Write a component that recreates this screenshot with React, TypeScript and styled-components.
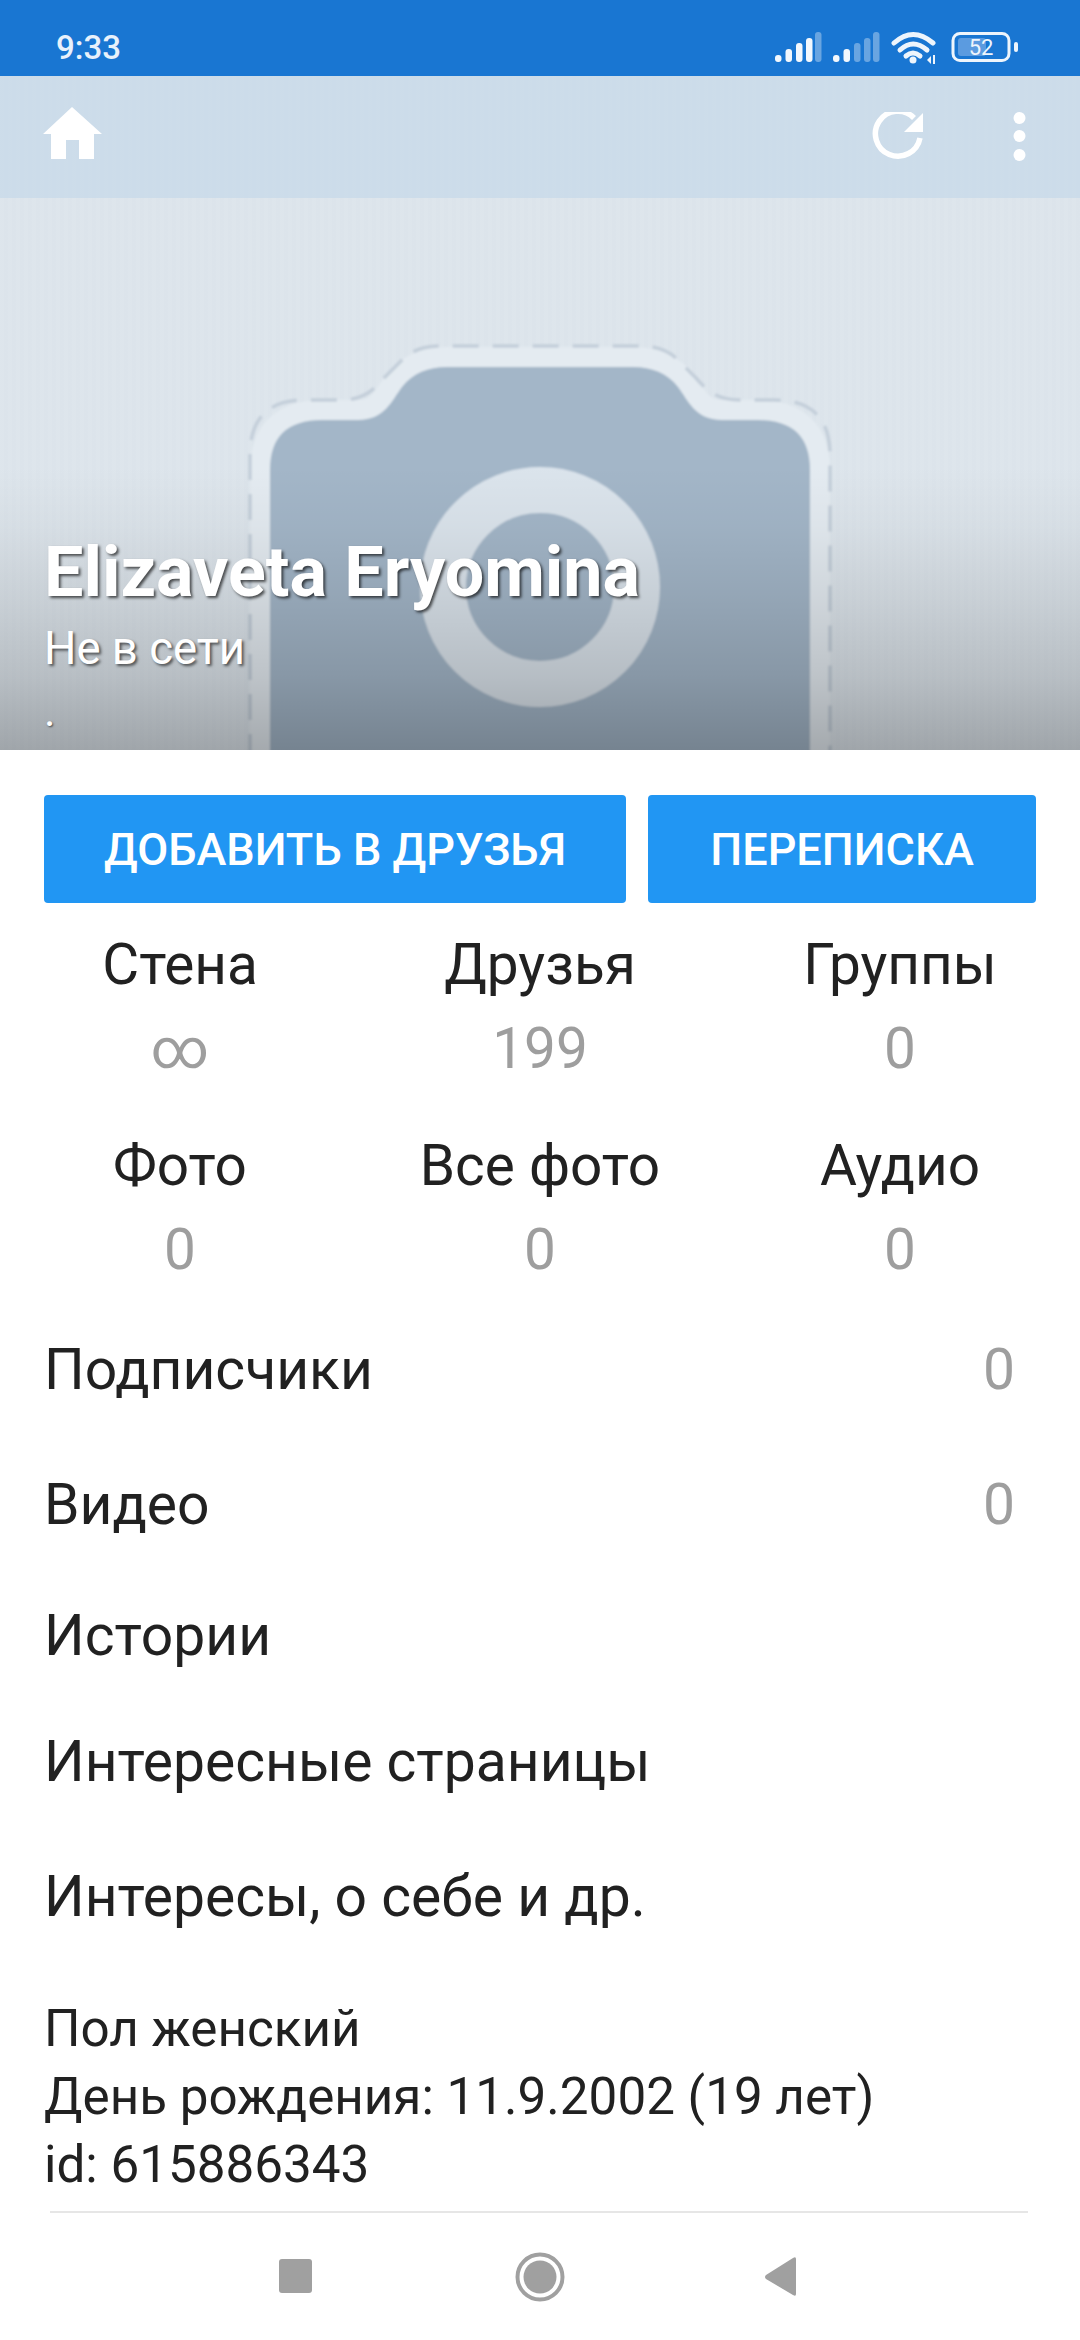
import React from "react";
import styled, { createGlobalStyle } from "styled-components";

const Global = createGlobalStyle`
  html, body { margin: 0; padding: 0; background: #fff; }
  * { box-sizing: border-box; }
`;

const Page = styled.div`
  width: 1080px;
  height: 2340px;
  overflow: hidden;
  display: flex;
  flex-direction: column;
  background: #fff;
  font-family: Roboto, "Noto Sans", sans-serif;
  color: #212121;
`;

const StatusBar = styled.div`
  height: 76px;
  flex: none;
  background: #1976d2;
  display: flex;
  align-items: flex-start;
  justify-content: space-between;
  padding: 0 59px 0 56px;
`;

const Clock = styled.span`
  font-size: 33px;
  font-weight: 500;
  line-height: 36px;
  color: #e8f1fb;
  margin-top: 30px;
`;

const StatusIcons = styled.svg`
  width: 250px;
  height: 38px;
  margin-top: 28px;
`;

const Hero = styled.div`
  position: relative;
  height: 674px;
  flex: none;
  overflow: hidden;
  display: flex;
  flex-direction: column;
  justify-content: space-between;
  background: repeating-linear-gradient(90deg, rgba(255, 255, 255, 0.02) 0 4px, rgba(0, 0, 0, 0.003) 4px 8px), #dde5ec;
`;

const HeroArt = styled.svg`
  position: absolute;
  inset: 0;
  width: 1080px;
  height: 674px;
`;

const HeroShade = styled.div`
  position: absolute;
  inset: 0;
  background: linear-gradient(
    to bottom,
    rgba(0, 0, 0, 0) 0,
    rgba(0, 0, 0, 0) 390px,
    rgba(0, 0, 0, 0.03) 450px,
    rgba(0, 0, 0, 0.09) 520px,
    rgba(0, 0, 0, 0.17) 600px,
    rgba(0, 0, 0, 0.28) 674px
  );
`;

const Toolbar = styled.div`
  position: relative;
  height: 122px;
  display: flex;
  align-items: center;
  justify-content: space-between;
  background: rgba(180, 208, 232, 0.4);
  padding: 0 0 0 42px;
`;

const ToolbarActions = styled.div`
  display: flex;
  align-items: center;
  gap: 89px;
  padding-right: 54px;
`;

const IconSvg = styled.svg<{ $lift?: number }>`
  display: block;
  flex: none;
  margin-top: ${(p) => p.$lift ?? 0}px;
`;

const HeroText = styled.div`
  position: relative;
  padding: 0 0 0 44px;
  color: #fff;
`;

const Name = styled.div`
  font-size: 70px;
  font-weight: 700;
  line-height: 76px;
  text-shadow: 2px 2px 3px rgba(0, 0, 0, 0.65);
`;

const Presence = styled.div`
  font-size: 45.5px;
  line-height: 56px;
  margin-top: 11px;
  text-shadow: 2px 2px 3px rgba(0, 0, 0, 0.6);
`;

const Dot = styled.div`
  font-size: 44px;
  line-height: 56px;
  margin-top: 6px;
  margin-bottom: 11px;
  text-shadow: 1px 1px 2px rgba(0, 0, 0, 0.6);
`;

const Actions = styled.div`
  display: flex;
  gap: 22px;
  padding: 45px 44px 0;
`;

const ActionButton = styled.div<{ $width: number }>`
  width: ${(p) => p.$width}px;
  height: 108px;
  flex: none;
  display: flex;
  align-items: center;
  justify-content: center;
  background: #2196f3;
  border-radius: 4px;
  color: #fff;
  font-size: 45px;
  font-weight: 500;
`;

const StatsGrid = styled.div`
  display: grid;
  grid-template-columns: repeat(3, 360px);
  row-gap: 49px;
  margin-top: 28px;
`;

const Stat = styled.div`
  display: flex;
  flex-direction: column;
  align-items: center;
`;

const StatLabel = styled.div`
  font-size: 56.7px;
  line-height: 68px;
`;

const StatValue = styled.div`
  font-size: 56.7px;
  line-height: 68px;
  margin-top: 16px;
  color: #9e9e9e;
`;

const RowList = styled.div`
  margin-top: 17px;
  display: flex;
  flex-direction: column;
`;

const Row = styled.div<{ $height: number }>`
  height: ${(p) => p.$height}px;
  display: flex;
  align-items: center;
  justify-content: space-between;
  padding: 0 65px 0 44px;
  font-size: 57px;
`;

const RowCount = styled.span`
  color: #9e9e9e;
  font-size: 57px;
`;

const Info = styled.div`
  padding: 26px 44px 0 44px;
  font-size: 51.2px;
  line-height: 68px;
`;

const Divider = styled.div`
  height: 2px;
  margin: 12px 52px 0 50px;
  background: #e6e6e6;
  flex: none;
`;

const NavBar = styled.div`
  flex: 1;
  display: flex;
  align-items: flex-start;
  justify-content: center;
`;

const NavIcons = styled.svg`
  width: 560px;
  height: 60px;
  margin-top: 35px;
`;

const bars = [
  { x: 774, top: 55 },
  { x: 784.5, top: 49 },
  { x: 795, top: 43 },
  { x: 805, top: 38 },
  { x: 814, top: 32 },
];

function Signal({ dx, dim }: { dx: number; dim: number }) {
  return (
    <g>
      {bars.map((b, i) => (
        <rect
          key={b.x}
          x={b.x + dx}
          y={b.top}
          width={6.5}
          height={62 - b.top}
          rx={3}
          fill="#ffffff"
          fillOpacity={i >= dim ? 0.35 : 0.95}
        />
      ))}
    </g>
  );
}

const stats = [
  ["Стена", "∞"],
  ["Друзья", "199"],
  ["Группы", "0"],
  ["Фото", "0"],
  ["Все фото", "0"],
  ["Аудио", "0"],
];

const rows: { label: string; count?: string; height: number }[] = [
  { label: "Подписчики", count: "0", height: 136 },
  { label: "Видео", count: "0", height: 135 },
  { label: "Истории", height: 126 },
  { label: "Интересные страницы", height: 126 },
  { label: "Интересы, о себе и др.", height: 145 },
];

const bodyPath =
  "M270 760 V470 Q270 420 322 420 H358 C385 420 392 400 402 387 C413 373 428 367 447 367 H633 C652 367 667 373 678 387 C688 400 695 420 722 420 H758 Q810 420 810 470 V760 Z";
const dashedPath =
  "M250 760 V455 Q250 400 305 400 H340 C362 400 372 392 384 378 L402 360 C412 350 425 346 440 346 H640 C655 346 668 350 678 360 L696 378 C708 392 718 400 740 400 H775 Q830 400 830 455 V760";

export default function App() {
  return (
    <Page>
      <Global />
      <StatusBar>
        <Clock>9:33</Clock>
        <StatusIcons viewBox="770 28 250 38">
          <Signal dx={0} dim={4} />
          <Signal dx={58} dim={2} />
          <g fill="none" stroke="#eef5fc" strokeWidth={5} strokeLinecap="round">
            <path d="M893 43 Q912 26 932 43" />
            <path d="M899 50 Q912 38 926 50" />
            <path d="M905 56 Q912 50 919 56" />
          </g>
          <circle cx={912} cy={60} r={3.5} fill="#eef5fc" />
          <path d="M926 60 L930 56 V64 Z M932 55 H934 V64 H932 Z" fill="#eef5fc" />
          <rect x={952} y={33.5} width={56} height={27} rx={7} fill="none" stroke="#eef5fc" strokeWidth={3} />
          <rect x={957} y={38} width={28} height={18} rx={3} fill="#5b9be0" />
          <rect x={1013} y={42} width={4} height={10} rx={2} fill="#eef5fc" />
          <text x={980} y={55} textAnchor="middle" fontFamily="Roboto" fontSize={22} fill="#eef5fc">
            52
          </text>
        </StatusIcons>
      </StatusBar>

      <Hero>
        <HeroArt viewBox="0 76 1080 674">
          <defs>
            <filter id="soft" x="-5%" y="-5%" width="110%" height="110%">
              <feGaussianBlur stdDeviation="1.2" />
            </filter>
          </defs>
          <g filter="url(#soft)">
            <path d={bodyPath} fill="#a3b6c8" stroke="#e4ebf1" strokeWidth={40} strokeLinejoin="round" paintOrder="stroke" />
            <path d={dashedPath} fill="none" stroke="#c4cfda" strokeWidth={3.5} strokeDasharray="26 14" />
            <circle cx={540} cy={587} r={97} fill="none" stroke="#dbe4ec" strokeWidth={46} />
          </g>
        </HeroArt>
        <HeroShade />
        <Toolbar>
          <IconSvg $lift={-8} width={60} height={54} viewBox="41 105 60 54">
            <path d="M71 106 L101 133 H93 V158 H78 V139 H65 V158 H50 V133 H42 Z" fill="#fff" />
          </IconSvg>
          <ToolbarActions>
            <IconSvg width={52} height={50} viewBox="870 112 52 50">
              <path d="M912 118 A22.5 22.5 0 1 0 918 138" fill="none" stroke="#fff" strokeWidth={5.5} />
              <path d="M921 113 V132 H902 Z" fill="#fff" />
            </IconSvg>
            <IconSvg width={13} height={50} viewBox="1012.5 112 13 50">
              <circle cx={1019} cy={118} r={6} fill="#fff" />
              <circle cx={1019} cy={136} r={6} fill="#fff" />
              <circle cx={1019} cy={155} r={6} fill="#fff" />
            </IconSvg>
          </ToolbarActions>
        </Toolbar>
        <HeroText>
          <Name>Elizaveta Eryomina</Name>
          <Presence>Не в сети</Presence>
          <Dot>.</Dot>
        </HeroText>
      </Hero>

      <Actions>
        <ActionButton $width={582}>ДОБАВИТЬ В ДРУЗЬЯ</ActionButton>
        <ActionButton $width={388}>ПЕРЕПИСКА</ActionButton>
      </Actions>

      <StatsGrid>
        {stats.map(([label, value]) => (
          <Stat key={label}>
            <StatLabel>{label}</StatLabel>
            <StatValue>{value}</StatValue>
          </Stat>
        ))}
      </StatsGrid>

      <RowList>
        {rows.map((r) => (
          <Row key={r.label} $height={r.height}>
            <span>{r.label}</span>
            {r.count && <RowCount>{r.count}</RowCount>}
          </Row>
        ))}
      </RowList>

      <Info>
        Пол женский
        <br />
        День рождения: 11.9.2002 (19 лет)
        <br />
        id: 615886343
      </Info>
      <Divider />
      <NavBar>
        <NavIcons viewBox="260 2250 560 60">
          <rect x={279} y={2261} width={33} height={34} rx={3} fill="#a0a0a0" />
          <circle cx={540} cy={2279} r={22.5} fill="none" stroke="#a0a0a0" strokeWidth={4} />
          <circle cx={540} cy={2279} r={16.5} fill="#a0a0a0" />
          <path d="M796 2261 V2296 Q796 2299 793 2297 L766 2281 Q764 2279 766 2277 L793 2260 Q796 2258 796 2261 Z" fill="#a0a0a0" />
        </NavIcons>
      </NavBar>
    </Page>
  );
}
